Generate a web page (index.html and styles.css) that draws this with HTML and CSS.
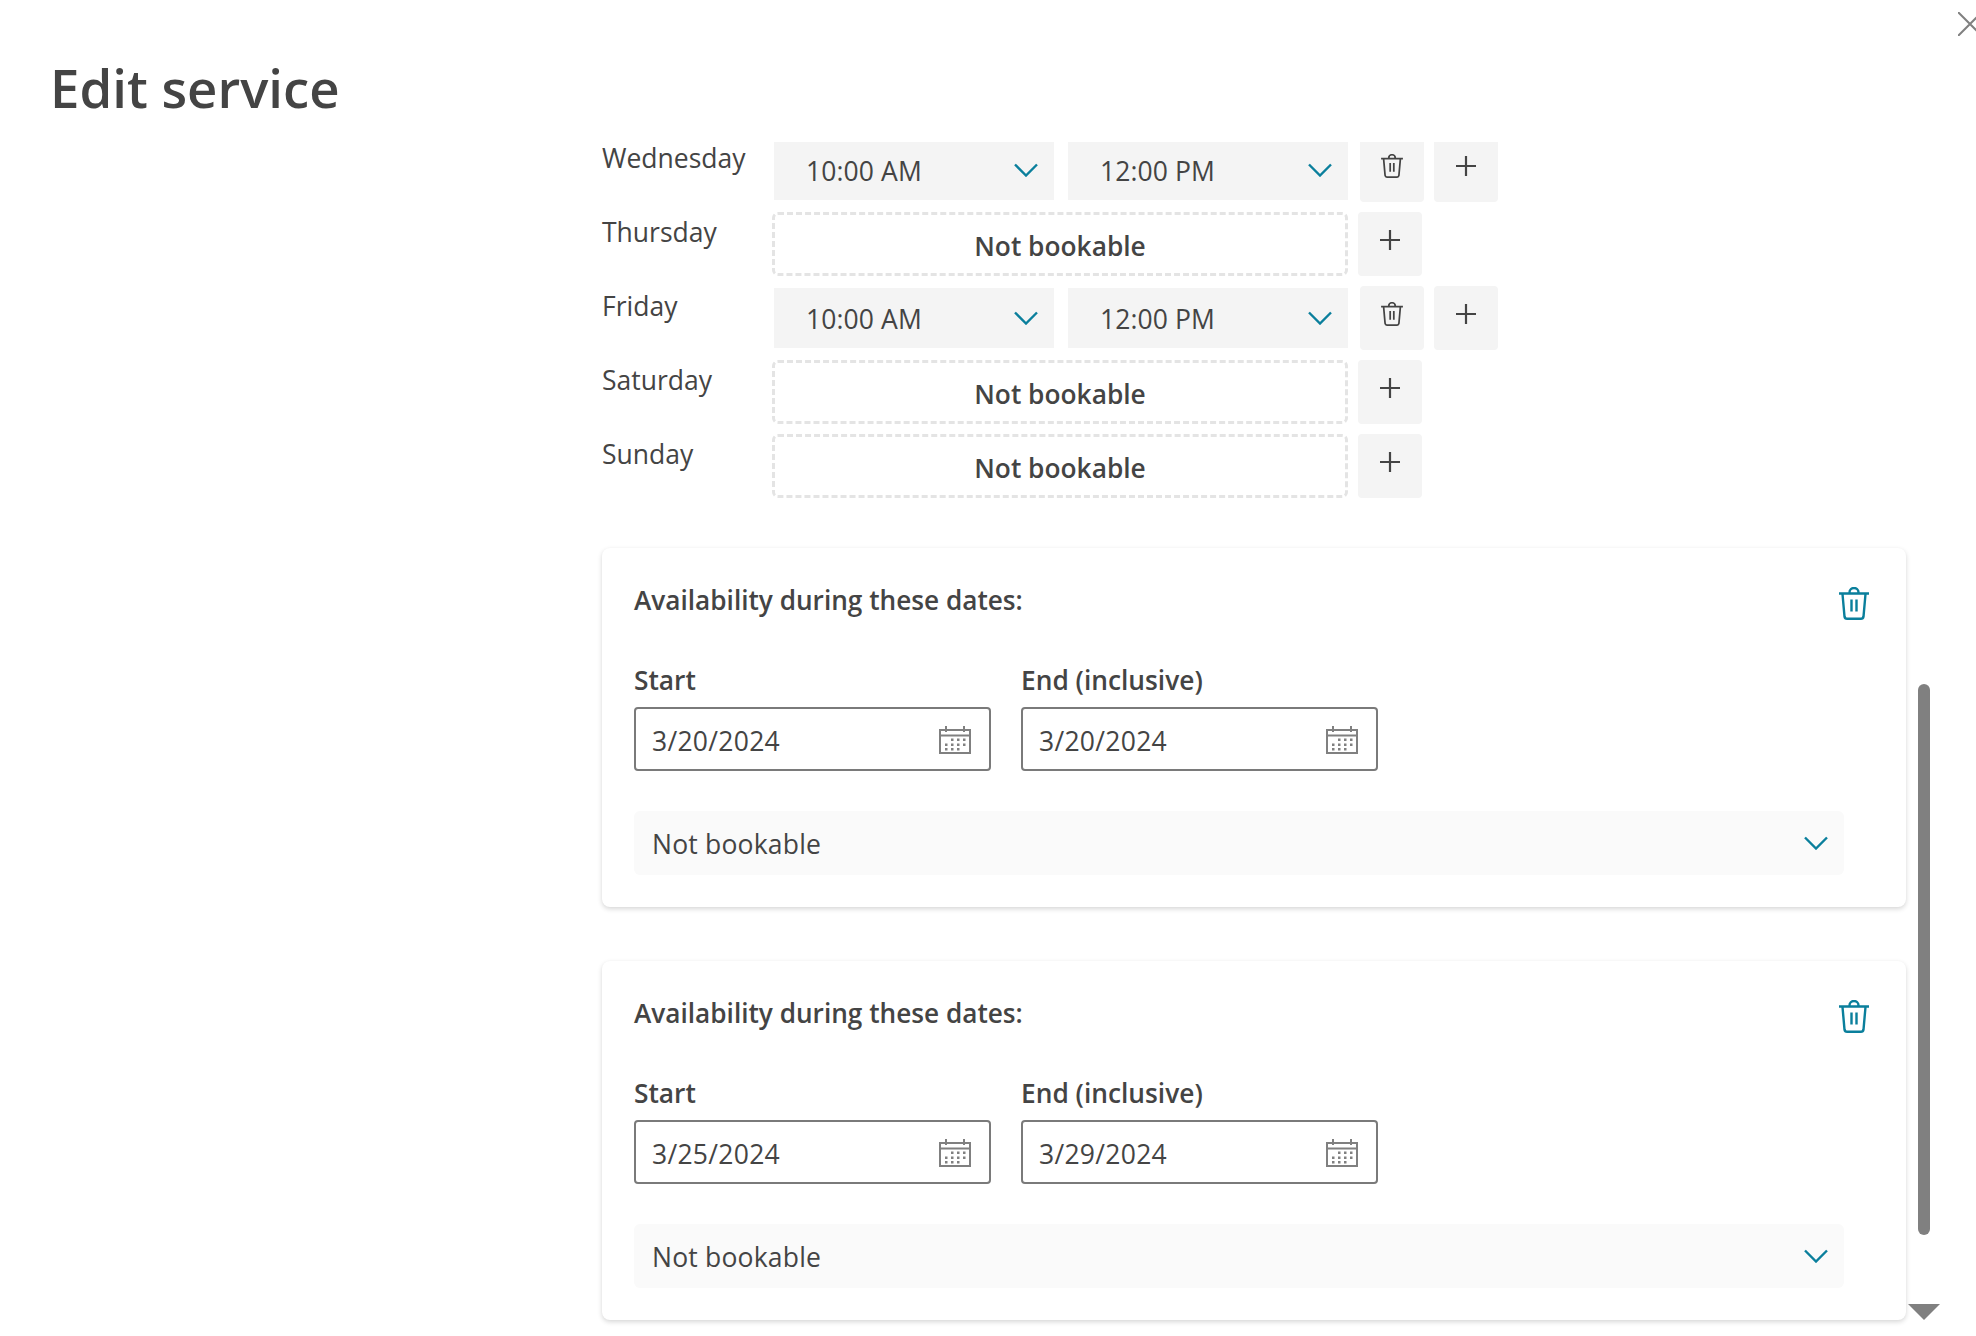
FILE: index.html
```html
<!DOCTYPE html>
<html lang="en">
<head>
<meta charset="utf-8">
<title>Edit service</title>
<link rel="stylesheet" href="styles.css">
</head>
<body>
<svg class="defs" aria-hidden="true">
  <symbol id="trash" viewBox="0 0 30 33">
    <path d="M0 6.500H30M10.500 6V5.500a4.500 4.500 0 0 1 9 0V6M3.500 7l2 22.500a2.600 2.600 0 0 0 2.600 2.200h13.800a2.600 2.600 0 0 0 2.600-2.200l2-22.500M12.500 12.500v12M17.500 12.500v12" fill="none" stroke="currentColor" stroke-width="2.400"/>
  </symbol>
  <symbol id="chev" viewBox="0 0 24 14">
    <path d="M1 1.500 12 12.500 23 1.500" fill="none" stroke="currentColor" stroke-width="2.400"/>
  </symbol>
  <symbol id="plus" viewBox="0 0 20 20">
    <path d="M0 10H20M10 0V20" fill="none" stroke="currentColor" stroke-width="2.200"/>
  </symbol>
  <symbol id="cal" viewBox="0 0 32 29">
    <path d="M1 5H31V28H1ZM1 10.500H31M7 1V7M25 1V7" fill="none" stroke="currentColor" stroke-width="2"/>
    <path d="M12 13.500h2.500v2.500H12ZM18 13.500h2.500v2.500H18ZM24 13.500h2.500v2.500H24ZM6 18.500h2.500v2.500H6ZM12 18.500h2.500v2.500H12ZM18 18.500h2.500v2.500H18ZM24 18.500h2.500v2.500H24ZM6 23h2.500v2.500H6ZM12 23h2.500v2.500H12ZM18 23h2.500v2.500H18Z" fill="currentColor"/>
  </symbol>
</svg>

<div class="panel">
  <button class="close" type="button" aria-label="Close">
    <svg class="close-icon" viewBox="0 0 24 24"><path d="M0 0 24 24M24 0 0 24" fill="none" stroke="currentColor" stroke-width="2"/></svg>
  </button>
  <header class="head"><h1 class="title">Edit service</h1></header>

  <main class="scroll">
    <div class="content">
      <section class="hours">
        <div class="row row-clip">
          <span class="day">Wednesday</span>
          <div class="times">
            <div class="select"><span>10:00 AM</span><svg class="chev"><use href="#chev"/></svg></div>
            <div class="select"><span>12:00 PM</span><svg class="chev"><use href="#chev"/></svg></div>
          </div>
          <button class="tool tool-del" type="button" aria-label="Delete"><svg class="ico-trash"><use href="#trash"/></svg></button>
          <button class="tool" type="button" aria-label="Add"><svg class="ico-plus"><use href="#plus"/></svg></button>
        </div>
        <div class="row">
          <span class="day">Thursday</span>
          <div class="closed">Not bookable</div>
          <button class="tool" type="button" aria-label="Add"><svg class="ico-plus"><use href="#plus"/></svg></button>
        </div>
        <div class="row">
          <span class="day">Friday</span>
          <div class="times">
            <div class="select"><span>10:00 AM</span><svg class="chev"><use href="#chev"/></svg></div>
            <div class="select"><span>12:00 PM</span><svg class="chev"><use href="#chev"/></svg></div>
          </div>
          <button class="tool tool-del" type="button" aria-label="Delete"><svg class="ico-trash"><use href="#trash"/></svg></button>
          <button class="tool" type="button" aria-label="Add"><svg class="ico-plus"><use href="#plus"/></svg></button>
        </div>
        <div class="row">
          <span class="day">Saturday</span>
          <div class="closed">Not bookable</div>
          <button class="tool" type="button" aria-label="Add"><svg class="ico-plus"><use href="#plus"/></svg></button>
        </div>
        <div class="row">
          <span class="day">Sunday</span>
          <div class="closed">Not bookable</div>
          <button class="tool" type="button" aria-label="Add"><svg class="ico-plus"><use href="#plus"/></svg></button>
        </div>
      </section>

      <section class="card">
        <div class="card-top">
          <h2 class="card-title">Availability during these dates:</h2>
          <svg class="card-trash"><use href="#trash"/></svg>
        </div>
        <div class="dates">
          <div class="field">
            <label class="label">Start</label>
            <div class="input"><span>3/20/2024</span><svg class="cal"><use href="#cal"/></svg></div>
          </div>
          <div class="field">
            <label class="label">End (inclusive)</label>
            <div class="input"><span>3/20/2024</span><svg class="cal"><use href="#cal"/></svg></div>
          </div>
        </div>
        <div class="drop"><span>Not bookable</span><svg class="chev"><use href="#chev"/></svg></div>
      </section>

      <section class="card">
        <div class="card-top">
          <h2 class="card-title">Availability during these dates:</h2>
          <svg class="card-trash"><use href="#trash"/></svg>
        </div>
        <div class="dates">
          <div class="field">
            <label class="label">Start</label>
            <div class="input"><span>3/25/2024</span><svg class="cal"><use href="#cal"/></svg></div>
          </div>
          <div class="field">
            <label class="label">End (inclusive)</label>
            <div class="input"><span>3/29/2024</span><svg class="cal"><use href="#cal"/></svg></div>
          </div>
        </div>
        <div class="drop"><span>Not bookable</span><svg class="chev"><use href="#chev"/></svg></div>
      </section>
    </div>
  </main>

  <div class="thumb"></div>
  <div class="arrow"></div>
</div>
</body>
</html>
```

FILE: styles.css
```css
* { box-sizing: border-box; }
html, body { margin: 0; padding: 0; background: #fff; }
body {
  font-family: "Open Sans", "Noto Sans", sans-serif;
  font-size: 26.5px;
  color: #444;
}
.defs { position: absolute; width: 0; height: 0; overflow: hidden; }

.panel { position: relative; width: 1976px; height: 1336px; overflow: hidden; }

.close {
  position: absolute; left: 1958px; top: 12px;
  width: 24px; height: 24px; padding: 0; border: 0; background: none; color: #808080;
}
.close-icon { display: block; width: 24px; height: 24px; }

.head { height: 138px; padding: 49px 0 0 50px; }
.title { margin: 0; font-size: 52.7px; line-height: 78px; font-weight: 600; color: #444; }

.scroll { height: 1198px; overflow: hidden; padding-left: 602px; }
.content { width: 1304px; }

.hours { display: flex; flex-direction: column; gap: 10px; }
.row { display: flex; height: 64px; }
.day { width: 170px; line-height: 36px; padding-top: 2px; flex: none; }
.times { display: flex; gap: 14px; margin: 2px 12px 2px 2px; flex: none; }
.select {
  width: 280px; height: 60px; background: #f4f4f4;
  display: flex; align-items: center; justify-content: space-between;
  padding: 0 16px 0 32px;
  letter-spacing: 0.1px;
}
.select span, .drop span { padding-top: 2px; }
.input span { padding-top: 4px; }
.chev { display: block; width: 24px; height: 14px; color: #0a7f9c; }

.closed {
  width: 576px; height: 64px; margin-right: 10px; padding-top: 4px;
  border: 3px dashed #e4e4e4; border-radius: 6px;
  display: flex; align-items: center; justify-content: center;
  font-size: 26.3px; font-weight: 600;
}
.tool {
  width: 64px; height: 64px; padding: 9px 0 0; border: 0; border-radius: 4px; background: #f4f4f4; color: #444;
  display: flex; justify-content: center; align-items: flex-start; flex: none;
}
.tool-del { margin-right: 10px; }
.ico-plus { display: block; width: 20px; height: 20px; margin-top: 9px; }
.ico-trash { display: block; width: 22px; height: 24px; margin-top: 7px; }

/* First row is scrolled partly under the header */
.row-clip .times { margin-top: 4px; }
.row-clip .select { height: 58px; padding-bottom: 2px; }
.row-clip .tool { height: 60px; margin-top: 4px; padding-top: 5px; border-radius: 0 0 4px 4px; }

.card {
  height: 359px; margin-top: 50px; padding: 33px 62px 0 32px;
  background: #fff; border-radius: 8px;
  box-shadow: 0 2px 5px rgba(0, 0, 0, 0.16), 0 0 2px rgba(0, 0, 0, 0.02);
}
.card + .card { margin-top: 54px; }
.card-top { display: flex; justify-content: space-between; align-items: flex-start; height: 77px; }
.card-title { margin: 0; padding-top: 1px; font-size: 26.2px; line-height: 36px; font-weight: 600; color: #444; }
.card-trash { display: block; width: 30px; height: 33px; color: #0a7f9c; margin: 6px -25px 0 0; flex: none; }

.dates { display: flex; gap: 30px; }
.field { width: 357px; }
.label { display: block; font-size: 26.3px; font-weight: 600; line-height: 44px; height: 49px; }
.input {
  height: 64px; border: 2px solid #7a7a7a; border-radius: 4px;
  display: flex; align-items: center; justify-content: space-between;
  padding: 0 18px 0 16px;
  letter-spacing: 0.28px;
}
.cal { display: block; width: 32px; height: 29px; color: #808080; }

.drop {
  height: 64px; margin-top: 40px; background: #fafafa; border-radius: 6px;
  display: flex; align-items: center; justify-content: space-between;
  padding: 0 16px 0 18px;
  letter-spacing: 0.2px;
}

.thumb { position: absolute; left: 1918px; top: 684px; width: 12px; height: 551px; border-radius: 6px; background: #808080; }
.arrow {
  position: absolute; left: 1908px; top: 1304px; width: 0; height: 0;
  border-left: 16px solid transparent; border-right: 16px solid transparent; border-top: 16px solid #808080;
}
```
